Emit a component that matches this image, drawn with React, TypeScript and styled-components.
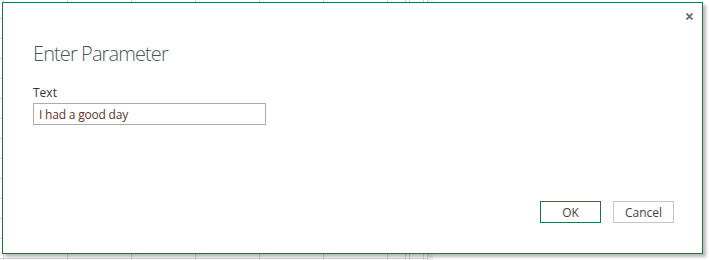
import React from "react";
import styled, { createGlobalStyle } from "styled-components";

const Global = createGlobalStyle`
  html, body { margin: 0; padding: 0; background: #fff; }
  body { font-family: "Segoe UI", "Open Sans", "Noto Sans", sans-serif; }
`;

const GRID = "#d4d4d4";

const Sheet = styled.div`
  width: 709px;
  height: 260px;
  box-sizing: border-box;
  padding: 2px 0 0 2px;
  overflow: hidden;
  background-color: #fff;
  background-image:
    linear-gradient(to right, transparent 0 405px, ${GRID} 405px 406px, transparent 406px 409px, ${GRID} 409px 410px, transparent 410px 423px, ${GRID} 423px 424px, transparent 424px 427px, ${GRID} 427px 428px, #efefef 428px 433px, transparent 433px),
    repeating-linear-gradient(to right, transparent 0 3px, ${GRID} 3px 4px, transparent 4px 64px),
    repeating-linear-gradient(to bottom, transparent 0 18px, ${GRID} 18px 19px, transparent 19px 20px);
  background-size: 709px 260px, 388px 260px, 433px 260px;
  background-repeat: no-repeat;
`;

const Dialog = styled.div`
  width: 701px;
  height: 252px;
  box-sizing: border-box;
  border: 1px solid #217346;
  background: #fff;
  box-shadow: 3px 3px 3px rgba(0, 0, 0, 0.28);
  display: flex;
  flex-direction: column;
`;

const Header = styled.div`
  height: 37px;
  display: flex;
  justify-content: flex-end;
  align-items: flex-start;
  padding: 10px 9px 0 0;
  box-sizing: border-box;
`;

const CloseButton = styled.button`
  border: 0;
  background: transparent;
  padding: 0;
  width: 7px;
  height: 7px;
  display: flex;
  cursor: pointer;
`;

const Body = styled.div`
  padding-left: 30px;
  display: flex;
  flex-direction: column;
  align-items: flex-start;
`;

const Title = styled.h1`
  margin: 0;
  font-size: 20px;
  line-height: 28px;
  font-weight: 300;
  color: #4d5858;
  letter-spacing: -0.9px;
`;

const Label = styled.label`
  margin-top: 17px;
  font-size: 12px;
  line-height: 16px;
  color: #333;
`;

const TextInput = styled.input`
  margin-top: 2px;
  width: 233px;
  height: 22px;
  box-sizing: border-box;
  border: 1px solid #ababab;
  padding: 0 5px;
  font-family: inherit;
  font-size: 12px;
  letter-spacing: -0.2px;
  color: #5a3535;
  outline: none;
`;

const Footer = styled.div`
  margin-top: auto;
  display: flex;
  justify-content: flex-end;
  gap: 12px;
  padding: 0 28px 30px 0;
`;

const Button = styled.button<{ $primary?: boolean }>`
  width: 61px;
  height: 22px;
  box-sizing: border-box;
  background: #fff;
  border: 1px solid ${(p) => (p.$primary ? "#217346" : "#c6c6c6")};
  font-family: inherit;
  font-size: 12px;
  color: #444;
  padding: 0;
  cursor: pointer;
`;

export default function App() {
  return (
    <>
      <Global />
      <Sheet>
        <Dialog>
          <Header>
            <CloseButton aria-label="Close">
              <svg width="7" height="7" viewBox="0 0 7 7">
                <path d="M0.5 0.5 L6.5 6.5 M6.5 0.5 L0.5 6.5" stroke="#6a6a6a" strokeWidth="1.8" />
              </svg>
            </CloseButton>
          </Header>
          <Body>
            <Title>Enter Parameter</Title>
            <Label htmlFor="param-text">Text</Label>
            <TextInput id="param-text" defaultValue="I had a good day" />
          </Body>
          <Footer>
            <Button $primary>OK</Button>
            <Button>Cancel</Button>
          </Footer>
        </Dialog>
      </Sheet>
    </>
  );
}
